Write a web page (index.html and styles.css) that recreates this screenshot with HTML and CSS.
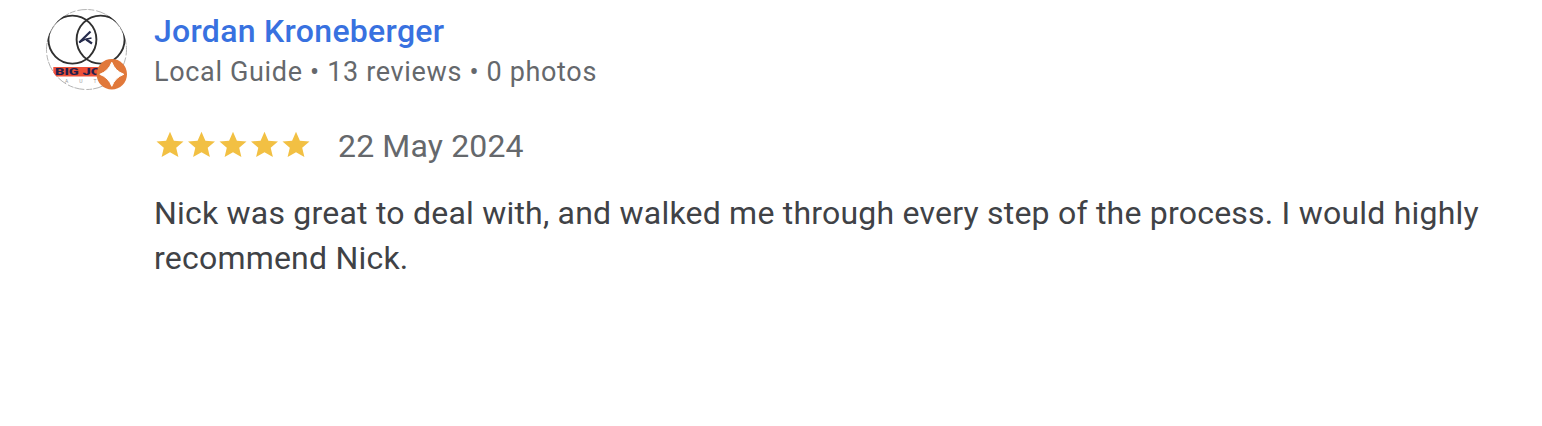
FILE: index.html
```
<!DOCTYPE html>
<html lang="en">
<head>
<meta charset="utf-8">
<title>Review</title>
<link rel="stylesheet" href="styles.css">
</head>
<body>
<article class="review">
  <svg class="avatar" viewBox="0 0 84 84" aria-hidden="true">
    <defs><clipPath id="disc"><circle cx="41.5" cy="41.5" r="40.5"/></clipPath></defs>
    <circle cx="41.5" cy="41.5" r="40" fill="#fff" stroke="#aaa" stroke-width=".9" stroke-dasharray="6 2 10 1"/>
    <g clip-path="url(#disc)">
      <g fill="none" stroke="#303030" stroke-width="1.9">
        <circle cx="27.4" cy="31.6" r="24"/>
        <circle cx="55.6" cy="31.6" r="24"/>
      </g>
      <g fill="none" stroke="#252b4c">
        <path d="M34.5 34.3 45.5 23.5" stroke-width="2.2"/>
        <path d="M34 34.5 39.5 31.5 46.5 30" stroke-width="1.5"/>
        <path d="M41.2 31.5 47 35.5" stroke-width="2.2"/>
      </g>
      <path d="M8.3 59H62v9.600H8.300z" fill="#ee5138"/>
      <text class="logo-name" x="10" y="67" textLength="54" lengthAdjust="spacingAndGlyphs">BIG JOE</text>
      <text class="logo-sub" x="20" y="75" textLength="46">AUTO</text>
    </g>
    <circle cx="66.8" cy="66.3" r="15.2" fill="#e1783a"/>
    <path d="M66.800 54.300Q70.100 63 78.800 66.300Q70.100 69.600 66.800 78.300Q63.500 69.600 54.800 66.300Q63.500 63 66.800 54.300Z" fill="#fff" stroke="#fff" stroke-width="1" stroke-linejoin="round"/>
  </svg>
  <div class="content">
    <h1 class="name">Jordan Kroneberger</h1>
    <p class="meta">Local Guide • 13 reviews • 0 photos</p>
    <div class="rating">
      <svg class="stars" viewBox="0 0 158 30" role="img" aria-label="5 stars">
        <defs><path id="star" d="M0-13.500 3.900-4.500 13.500-3.700 6.200 2.600 8.400 11.900 0 7-8.400 11.900-6.200 2.600-13.500-3.700-3.900-4.500Z"/></defs>
        <g fill="#f2c043">
          <use href="#star" x="16" y="14.200"/>
          <use href="#star" x="47.500" y="14.200"/>
          <use href="#star" x="79" y="14.200"/>
          <use href="#star" x="110.500" y="14.200"/>
          <use href="#star" x="142" y="14.200"/>
        </g>
      </svg>
      <span class="date">22 May 2024</span>
    </div>
    <p class="comment">Nick was great to deal with, and walked me through every step of the process. I would highly recommend Nick.</p>
  </div>
</article>
</body>
</html>
```
FILE: styles.css
```
body {
  margin: 0;
  background: #fff;
  font-family: Roboto, "Liberation Sans", sans-serif;
}

.review {
  display: flex;
  gap: 25px;
  padding: 8px 40px 0 45px;
}

.avatar {
  flex: none;
  width: 84px;
  height: 84px;
}

.logo-name {
  font: 900 9px Roboto, sans-serif;
  fill: #25204d;
}

.logo-sub {
  font: 5px Roboto, sans-serif;
  fill: #999;
}

.content {
  flex: 1;
}

.name {
  margin: 0;
  font-size: 32px;
  font-weight: 500;
  line-height: 46px;
  letter-spacing: 0.3px;
  color: #3871e0;
}

.meta {
  margin: 0;
  font-size: 27px;
  line-height: 36px;
  letter-spacing: 0.66px;
  color: #65686c;
}

.rating {
  display: flex;
  align-items: center;
  gap: 26px;
  height: 46px;
  margin-top: 33px;
}

.stars {
  width: 158px;
  height: 30px;
}

.date {
  font-size: 32px;
  line-height: 46px;
  letter-spacing: 0.15px;
  color: #65686c;
}

.comment {
  margin: 22px 0 0;
  font-size: 32px;
  line-height: 45px;
  letter-spacing: 0.215px;
  color: #404246;
}
```
